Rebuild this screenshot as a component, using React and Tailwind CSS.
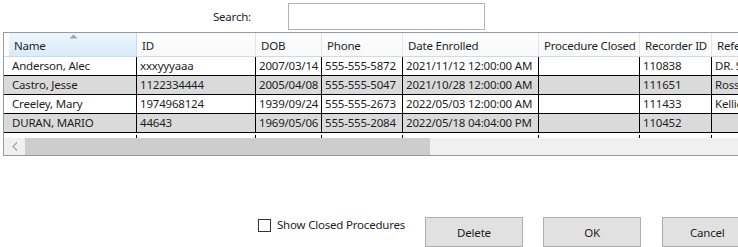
import React from 'react';

const columns = [
  { key: 'name', label: 'Name', width: 128 },
  { key: 'id', label: 'ID', width: 119 },
  { key: 'dob', label: 'DOB', width: 66 },
  { key: 'phone', label: 'Phone', width: 81 },
  { key: 'enrolled', label: 'Date Enrolled', width: 136 },
  { key: 'closed', label: 'Procedure Closed', width: 101 },
  { key: 'recorder', label: 'Recorder ID', width: 72 },
  { key: 'ref', label: 'Referring Doctor', width: 90 },
];

const rows = [
  { name: 'Anderson, Alec', id: 'xxxyyyaaa', dob: '2007/03/14', phone: '555-555-5872', enrolled: '2021/11/12 12:00:00 AM', closed: '', recorder: '110838', ref: 'DR. SMITH' },
  { name: 'Castro, Jesse', id: '1122334444', dob: '2005/04/08', phone: '555-555-5047', enrolled: '2021/10/28 12:00:00 AM', closed: '', recorder: '111651', ref: 'Ross Miller' },
  { name: 'Creeley, Mary', id: '1974968124', dob: '1939/09/24', phone: '555-555-2673', enrolled: '2022/05/03 12:00:00 AM', closed: '', recorder: '111433', ref: 'Kellie Hart' },
  { name: 'DURAN, MARIO', id: '44643', dob: '1969/05/06', phone: '555-555-2084', enrolled: '2022/05/18 04:04:00 PM', closed: '', recorder: '110452', ref: '' },
];

function HeaderCell({ col, sorted }) {
  return (
    <div
      style={{ width: col.width }}
      className={`relative shrink-0 h-full flex items-center pl-[5px] border-r overflow-hidden whitespace-nowrap ${
        sorted
          ? 'bg-gradient-to-b from-[#eef6fd] to-[#d9ebf9] border-[#c2dcf2]'
          : 'bg-gradient-to-b from-white to-[#f7f8f9] border-[#e3e5e8]'
      }`}
    >
      {sorted && (
        <svg className="absolute left-[60px] top-[1px]" width="9" height="5" viewBox="0 0 9 5">
          <path d="M0.5 4.5 L4.5 0.5 L8.5 4.5 Z" fill="#97a6b6" />
        </svg>
      )}
      <span className="mt-[2px]">{col.label}</span>
    </div>
  );
}

function Row({ row, shaded }) {
  return (
    <div className={`flex h-[19px] shrink-0 border-b border-black ${shaded ? 'bg-[#dadada]' : 'bg-white'}`}>
      <div className="w-[5px] shrink-0" />
      {columns.map((col) => (
        <div
          key={col.key}
          style={{ width: col.width }}
          className="shrink-0 h-full border-r border-black pl-[3px] flex items-center overflow-hidden whitespace-nowrap"
        >
          {row[col.key]}
        </div>
      ))}
    </div>
  );
}

export default function App() {
  return (
    <div className="w-[738px] h-[247px] overflow-hidden bg-white flex flex-col text-[11.5px] tracking-[-0.2px] text-[#1e1e1e] font-['Noto_Sans',sans-serif]">
      {/* Search bar */}
      <div className="h-[32px] shrink-0 flex items-start">
        <span className="w-[251px] text-right mt-[8px]">Search:</span>
        <input
          type="text"
          className="ml-[37px] mt-[3px] w-[197px] h-[27px] border border-[#b4b4b4] outline-none px-1"
        />
      </div>

      {/* Grid */}
      <div className="ml-[3px] w-[780px] h-[124px] shrink-0 border border-[#8c9bb0] flex flex-col overflow-hidden">
        <div className="flex h-[24px] shrink-0 border-b border-[#d5d8dc]">
          <div className="w-[5px] shrink-0 bg-white" />
          {columns.map((col, i) => (
            <HeaderCell key={col.key} col={col} sorted={i === 0} />
          ))}
        </div>
        {rows.map((row, i) => (
          <Row key={row.name} row={row} shaded={i % 2 === 1} />
        ))}
        <div className="flex h-[5px] shrink-0 bg-white">
          <div className="w-[5px] shrink-0" />
          {columns.map((col) => (
            <div key={col.key} style={{ width: col.width }} className="shrink-0 h-full border-r border-black mt-[2px]" />
          ))}
        </div>
        {/* Horizontal scrollbar */}
        <div className="flex h-[17px] shrink-0 bg-[#f0f0f0]">
          <div className="w-[21px] shrink-0 flex items-center justify-center">
            <svg width="6" height="9" viewBox="0 0 6 9">
              <path d="M5 0.5 L1 4.5 L5 8.5" stroke="#a3a3a3" strokeWidth="1.2" fill="none" />
            </svg>
          </div>
          <div className="w-[405px] shrink-0 bg-[#cdcdcd]" />
        </div>
      </div>

      {/* Bottom controls */}
      <div className="flex items-start mt-[61px]">
        <label className="ml-[258px] mt-[1px] flex items-center gap-[6px] whitespace-nowrap w-[147px] shrink-0">
          <span className="w-[13px] h-[13px] shrink-0 border border-[#333] bg-white" />
          <span className="-mt-[2px]">Show Closed Procedures</span>
        </label>
        <button className="ml-[20px] w-[98px] h-[30px] shrink-0 border border-[#adadad] bg-[#e1e1e1] pt-[2px]">Delete</button>
        <button className="ml-[20px] w-[98px] h-[30px] shrink-0 border border-[#adadad] bg-[#e1e1e1] pt-[2px]">OK</button>
        <button className="ml-[21px] w-[98px] h-[30px] shrink-0 border border-[#adadad] bg-[#e1e1e1] pt-[2px] text-left pl-[27px]">Cancel</button>
      </div>
    </div>
  );
}
